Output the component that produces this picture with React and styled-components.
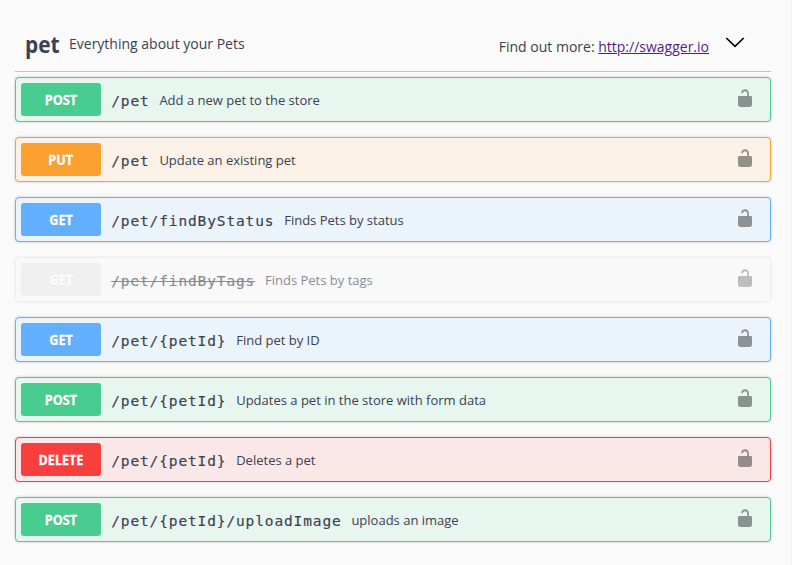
import React from "react";
import styled, { createGlobalStyle } from "styled-components";

const GlobalStyle = createGlobalStyle`
  * { box-sizing: border-box; }
  body { margin: 0; background: #fafafa; color: #3b4151; font-family: "Open Sans", sans-serif; }
`;

const palette = {
  post: ["#49cc90", "#e8f6f0"],
  put: ["#fca130", "#fbf1e6"],
  get: ["#61affe", "#ebf3fb"],
  delete: ["#f93e3e", "#fae7e7"],
  off: ["#ebebeb", "#f9f9f9"],
};

const Page = styled.main`
  height: 565px;
  padding: 17px 20px 0 15px;
  border-right: 1px solid #f0f0f0;
  overflow: hidden;
`;

const Header = styled.header`
  display: flex;
  align-items: center;
  height: 55px;
  margin-bottom: 5px;
  padding: 0 26px 0 10px;
  border-bottom: 1px solid #c0c1c4;
`;

const Title = styled.h3`
  width: 34px;
  margin: 0 10px 0 0;
  font-size: 24px;
  line-height: 30px;
  font-weight: 700;
`;

const Squeeze = styled.span`
  display: inline-block;
  transform: scaleX(${(p) => p.$x});
  transform-origin: ${(p) => p.$origin || "center"};
`;

const Tagline = styled.p`
  flex: 1;
  margin: 0;
  font-size: 14px;
  line-height: 20px;
`;

const Docs = styled.div`
  padding-top: 5px;
  font-size: 14px;
  line-height: 20px;
`;

const DocsLink = styled.a`
  color: #551a8b;
  text-decoration: underline;
`;

const Chevron = styled.svg`
  display: block;
  width: 20px;
  height: 20px;
  margin: 0 0 4px 16px;
`;

const List = styled.div`
  display: grid;
  gap: 15px;
`;

const Operation = styled.div`
  display: flex;
  align-items: center;
  height: 45px;
  padding: 0 18px 0 5px;
  border: 1px solid ${(p) => palette[p.$kind][0]};
  border-radius: 4px;
  background: ${(p) => palette[p.$kind][1]};
  box-shadow: ${(p) => (p.$kind === "off" ? "0 0 0 1px #eeeeee" : "0 0 3px rgba(0, 0, 0, 0.19)")};
  opacity: ${(p) => (p.$kind === "off" ? 0.6 : 1)};
`;

const Method = styled.span`
  width: 80px;
  height: 33px;
  border-radius: 3px;
  background: ${(p) => palette[p.$kind][0]};
  color: #fff;
  font-size: 14px;
  font-weight: 700;
  line-height: 33px;
  text-align: center;
  text-shadow: 0 1px 0 rgba(0, 0, 0, 0.1);
  -webkit-text-stroke: 0.3px #fff;
`;

const Path = styled.span`
  padding: 2px 9.8px 0 10.2px;
  font-family: "DejaVu Sans Mono", monospace;
  font-size: 14.5px;
  letter-spacing: 0.87px;
  line-height: 20px;
  -webkit-text-stroke: 0.15px #3b4151;
  text-decoration: ${(p) => (p.$struck ? "line-through" : "none")};
  text-decoration-thickness: 1px;
`;

const Summary = styled.span`
  flex: 1;
  font-size: 13px;
  line-height: 18px;
`;

const Lock = styled.svg`
  display: block;
  width: 14px;
  height: 18px;
  margin-bottom: 4px;
`;

const operations = [
  ["post", "POST", "/pet", "Add a new pet to the store"],
  ["put", "PUT", "/pet", "Update an existing pet"],
  ["get", "GET", "/pet/findByStatus", "Finds Pets by status"],
  ["off", "GET", "/pet/findByTags", "Finds Pets by tags"],
  ["get", "GET", "/pet/{petId}", "Find pet by ID"],
  ["post", "POST", "/pet/{petId}", "Updates a pet in the store with form data"],
  ["delete", "DELETE", "/pet/{petId}", "Deletes a pet"],
  ["post", "POST", "/pet/{petId}/uploadImage", "uploads an image"],
];

export default function App() {
  return (
    <Page>
      <GlobalStyle />
      <Header>
        <Title><Squeeze $x={0.87} $origin="left">pet</Squeeze></Title>
        <Tagline>Everything about your Pets</Tagline>
        <Docs>
          Find out more: <DocsLink href="http://swagger.io">http://swagger.io</DocsLink>
        </Docs>
        <Chevron viewBox="0 0 20 20" fill="none" stroke="#000" strokeWidth="1.6">
          <path d="M1.3 6 10 14.4 18.7 6" />
        </Chevron>
      </Header>
      <List>
        {operations.map(([kind, method, path, summary]) => (
          <Operation key={method + path} $kind={kind}>
            <Method $kind={kind}><Squeeze $x={0.9}>{method}</Squeeze></Method>
            <Path $struck={kind === "off"}>{path}</Path>
            <Summary>{summary}</Summary>
            <Lock viewBox="0 0 14 18" fill="#000" fillOpacity="0.4">
              <path d="M1.3 7H9.2V4.7C9.2 3.2 8.4 2.2 7.1 2.2C5.8 2.2 5 3 4.8 4.3H3.1C3.2 1.8 4.8.2 7.1.2C9.5.2 11 1.9 11 4.4V7H12.7C13.4 7 14 7.6 14 8.3V15.8C14 17 13 18 11.8 18H2.2C1 18 0 17 0 15.8V8.3C0 7.6.6 7 1.3 7Z" />
            </Lock>
          </Operation>
        ))}
      </List>
    </Page>
  );
}
